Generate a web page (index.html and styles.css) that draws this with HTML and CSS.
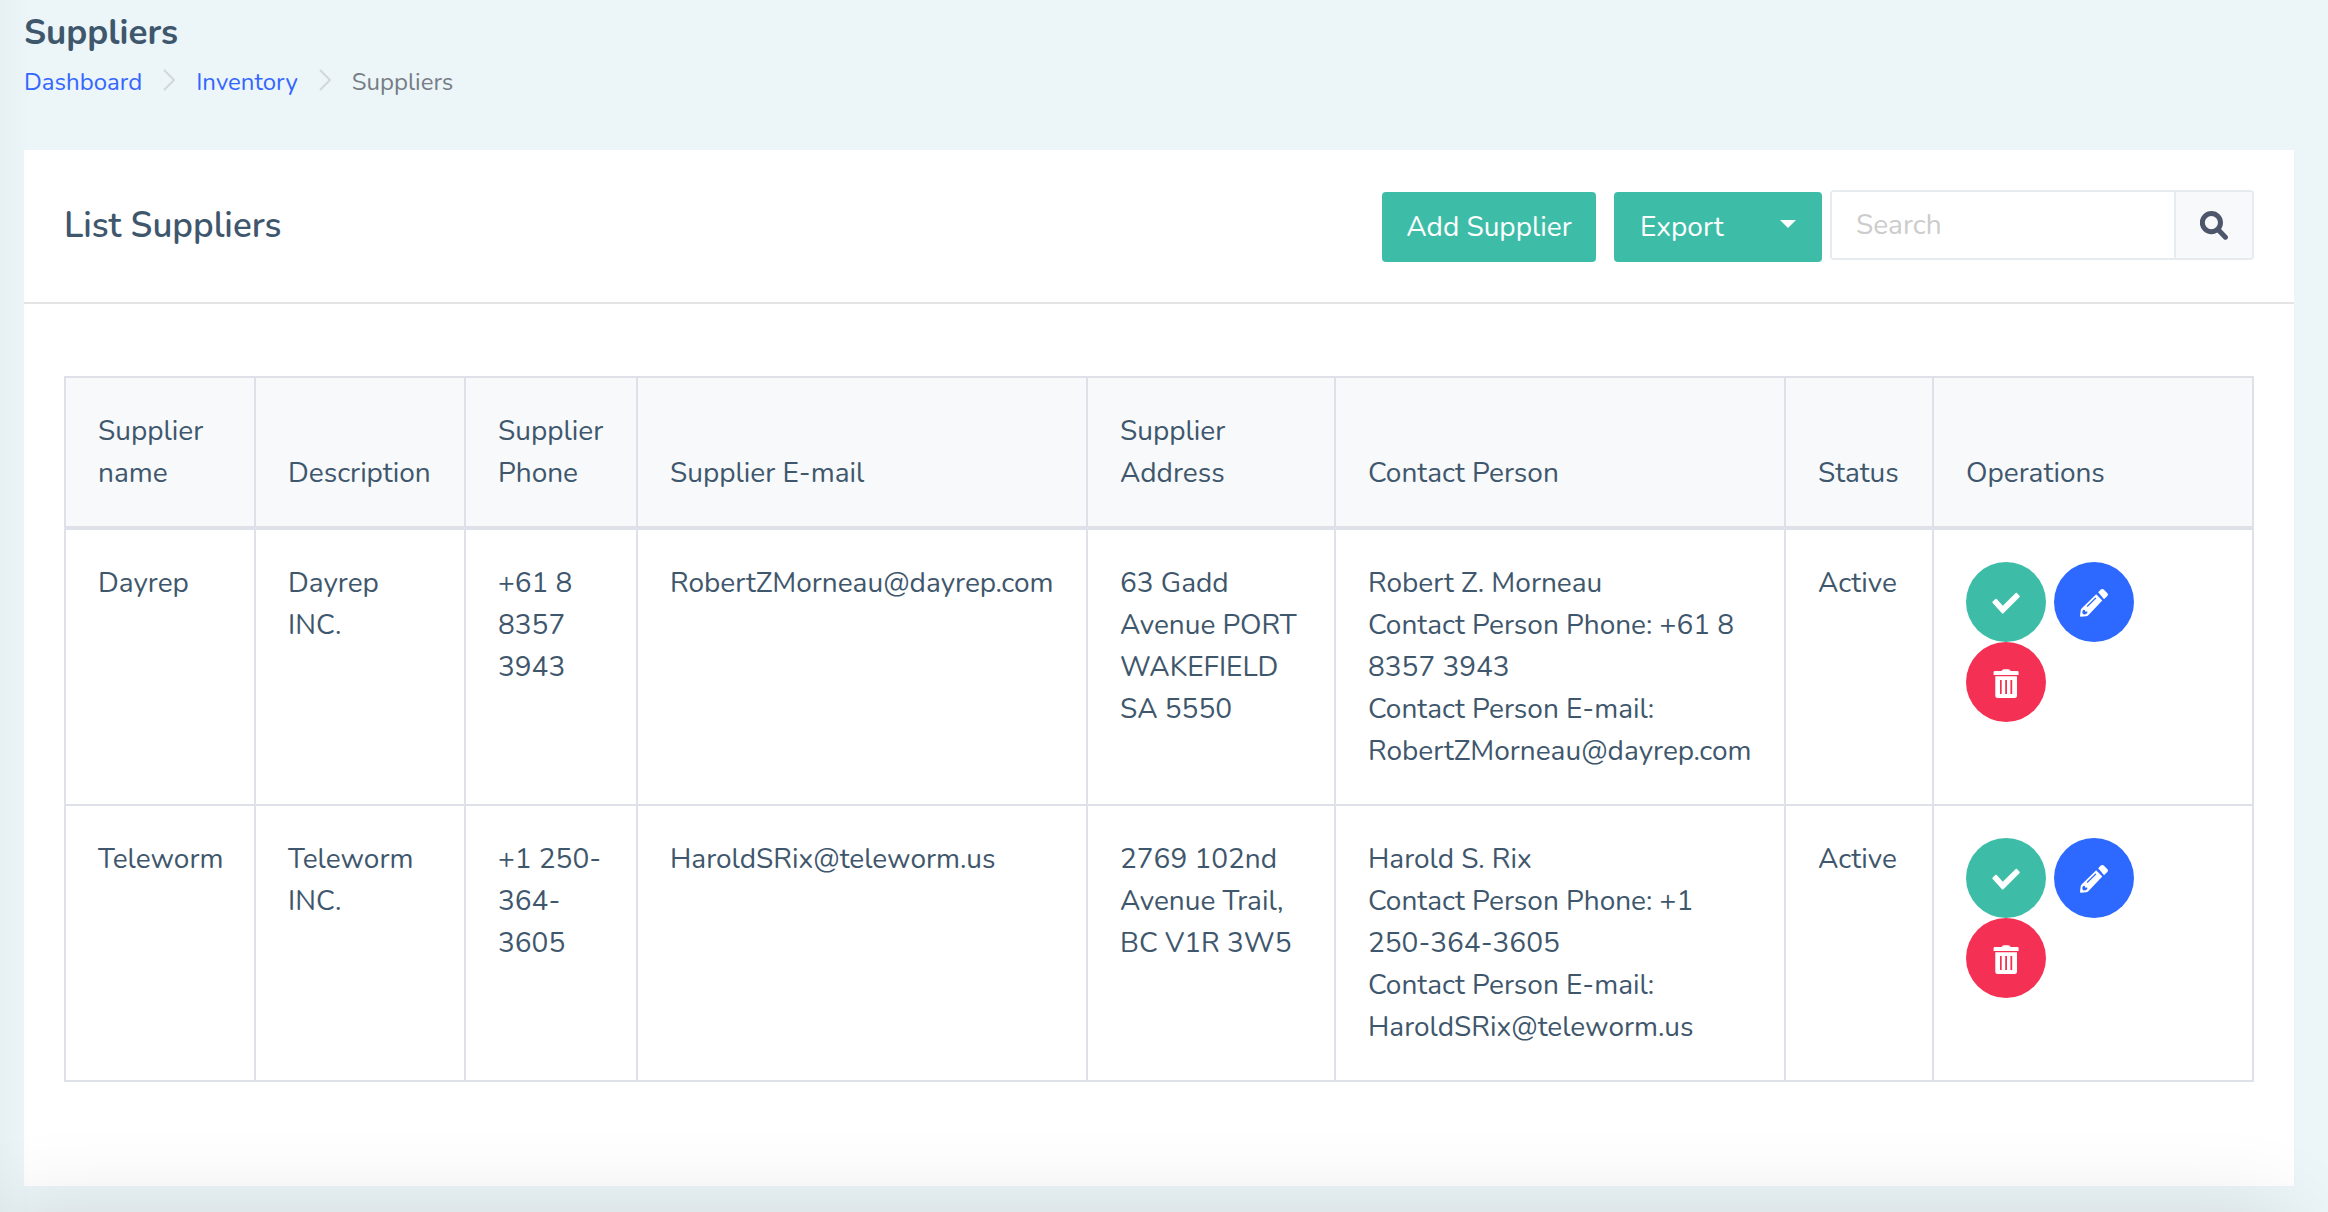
FILE: index.html
```html
<!DOCTYPE html>
<html lang="en">
<head>
  <meta charset="UTF-8" />
  <meta name="viewport" content="width=device-width, initial-scale=1.0"/>
  <title>Suppliers</title>
  <link rel="stylesheet" href="styles.css">
</head>
<body>
  <!-- icons used in the operations column -->
  <svg class="sprite" aria-hidden="true">
    <symbol id="icon-check" viewBox="0 0 28 30">
      <path d="M1.4 14.3L4 11.7L10.7 19.2L24.4 5.8L26.7 8.5L10.7 24.6Z" fill="currentColor" stroke="currentColor" stroke-width="2" stroke-linejoin="round"/>
    </symbol>
    <symbol id="icon-pencil" viewBox="0 0 28 30">
      <path d="M18.2 4.2L20.8 1.6Q22.3.2 23.8 1.6L27.2 5Q28.6 6.5 27.3 8L24 11.2Z" fill="currentColor"/>
      <path fill-rule="evenodd" d="M16.2 6.2L22.3 12.6L8.3 27.2Q7.3 28 6 28.2L.8 28.8Q0 28.8 0 28L.7 22.2Q.9 21 1.8 20.2ZM15.4 9.4L6.7 18L7.6 19L16.4 10.3ZM3.4 21.8L2.4 23.2L2.3 25L3.7 26.4L5.6 26.3L7.4 25L7.2 23.5L5 23.5L4.9 21.9Z" fill="currentColor"/>
    </symbol>
    <symbol id="icon-trash" viewBox="0 0 28 30">
      <path d="M2.7 3H9.5L10.5 1.8Q11 1.3 12 1.3H16.3Q17.2 1.3 17.7 1.8L18.7 3H25.5Q26.6 3 26.6 4.2V7H1.6V4.2Q1.6 3 2.7 3Z" fill="currentColor"/>
      <path fill-rule="evenodd" d="M3.3 8.2H25V27.5Q25 30 22.5 30H5.8Q3.3 30 3.3 27.5ZM8 12V26H9.7V12ZM13.2 12V26H15V12ZM18.4 12V26H20.2V12Z" fill="currentColor"/>
    </symbol>
  </svg>

  <header class="page-header">
    <h1>Suppliers</h1>
    <nav aria-label="Breadcrumb">
      <ol class="breadcrumb">
        <li><a href="#">Dashboard</a></li>
        <li><svg class="chevron" viewBox="0 0 12 22" aria-hidden="true"><path d="M1 1L11 11L1 21"/></svg><a href="#">Inventory</a></li>
        <li><svg class="chevron" viewBox="0 0 12 22" aria-hidden="true"><path d="M1 1L11 11L1 21"/></svg><span aria-current="page">Suppliers</span></li>
      </ol>
    </nav>
  </header>

  <main class="card">
    <div class="card-header">
      <h2>List Suppliers</h2>
      <div class="tools">
        <button type="button" class="btn">Add Supplier</button>
        <button type="button" class="btn btn-export" aria-haspopup="true">Export <span class="caret"></span></button>
        <form class="search">
          <input type="text" placeholder="Search" aria-label="Search">
          <button type="submit" aria-label="Search">
            <svg viewBox="0 0 28 29" aria-hidden="true"><circle cx="11.4" cy="11.6" r="9.1"/><path d="M18.5 19L25.4 26.2"/></svg>
          </button>
        </form>
      </div>
    </div>

    <div class="card-body">
      <table class="suppliers">
        <colgroup>
          <col class="col-name">
          <col class="col-description">
          <col class="col-phone">
          <col class="col-email">
          <col class="col-address">
          <col class="col-contact">
          <col class="col-status">
          <col>
        </colgroup>
        <thead>
          <tr>
            <th scope="col">Supplier name</th>
            <th scope="col">Description</th>
            <th scope="col">Supplier Phone</th>
            <th scope="col">Supplier E-mail</th>
            <th scope="col">Supplier<br>Address</th>
            <th scope="col">Contact Person</th>
            <th scope="col">Status</th>
            <th scope="col">Operations</th>
          </tr>
        </thead>
        <tbody>
          <tr>
            <td>Dayrep</td>
            <td>Dayrep<br>INC.</td>
            <td>+61 8<br>8357<br>3943</td>
            <td>RobertZMorneau@dayrep.com</td>
            <td>63 Gadd<br>Avenue PORT<br>WAKEFIELD<br>SA 5550</td>
            <td>Robert Z. Morneau<br>Contact Person Phone: +61 8<br>8357 3943<br>Contact Person E-mail:<br>RobertZMorneau@dayrep.com</td>
            <td>Active</td>
            <td>
              <div class="operations">
                <button type="button" class="op op-check" aria-label="Activate Dayrep"><svg><use href="#icon-check"/></svg></button>
                <button type="button" class="op op-edit" aria-label="Edit Dayrep"><svg><use href="#icon-pencil"/></svg></button>
                <button type="button" class="op op-delete" aria-label="Delete Dayrep"><svg><use href="#icon-trash"/></svg></button>
              </div>
            </td>
          </tr>
          <tr>
            <td>Teleworm</td>
            <td>Teleworm<br>INC.</td>
            <td>+1 250-<br>364-<br>3605</td>
            <td>HaroldSRix@teleworm.us</td>
            <td>2769 102nd<br>Avenue Trail,<br>BC V1R 3W5</td>
            <td>Harold S. Rix<br>Contact Person Phone: +1<br>250-364-3605<br>Contact Person E-mail:<br>HaroldSRix@teleworm.us</td>
            <td>Active</td>
            <td>
              <div class="operations">
                <button type="button" class="op op-check" aria-label="Activate Teleworm"><svg><use href="#icon-check"/></svg></button>
                <button type="button" class="op op-edit" aria-label="Edit Teleworm"><svg><use href="#icon-pencil"/></svg></button>
                <button type="button" class="op op-delete" aria-label="Delete Teleworm"><svg><use href="#icon-trash"/></svg></button>
              </div>
            </td>
          </tr>
        </tbody>
      </table>
    </div>
  </main>
</body>
</html>
```
FILE: styles.css
```css
* {
  box-sizing: border-box;
}
body {
  margin: 0;
  padding: 9px 34px 26px 24px;
  background-color: #ecf5f8;
  color: #3f576c;
  font-family: "Nunito", Lato, sans-serif;
  font-size: 28px;
  line-height: 42px;
}
/* soft shadows from the side menu and the bottom bar */
body::before,
body::after {
  content: "";
  position: fixed;
  pointer-events: none;
}
body::before {
  top: -100px;
  bottom: -100px;
  right: 100%;
  width: 100px;
  box-shadow: 0 0 40px rgba(0, 0, 0, 0.05);
}
body::after {
  top: 100%;
  left: 0;
  right: 40px;
  height: 200px;
  box-shadow: 0 0 90px rgba(0, 0, 0, 0.12);
}
button,
input {
  font: inherit;
  color: inherit;
}
button {
  cursor: pointer;
}
.sprite {
  display: none;
}

.page-header {
  padding-bottom: 49px;
}
h1 {
  margin: 0 0 6px;
  font-size: 35px;
  line-height: 48px;
  font-weight: 700;
}
.breadcrumb {
  display: flex;
  margin: 0;
  padding: 0;
  list-style: none;
  font-size: 24px;
  line-height: 38px;
  color: #777d85;
}
.breadcrumb li {
  display: flex;
}
.breadcrumb a {
  color: #3366ff;
  text-decoration: none;
}
.chevron {
  width: 12px;
  height: 22px;
  margin: 6px 21px 0;
  fill: none;
  stroke: #d3d7da;
  stroke-width: 2;
}

.card {
  background-color: #fff;
}
.card-header {
  display: flex;
  justify-content: space-between;
  align-items: center;
  padding: 40px;
  border-bottom: 2px solid #e4e4e4;
}
h2 {
  margin: 0;
  font-size: 35px;
  font-weight: 600;
}
.tools {
  display: flex;
  align-items: flex-end;
  height: 72px;
}
.btn {
  height: 70px;
  min-width: 214px;
  margin-right: 18px;
  padding: 0 24px;
  border: none;
  border-radius: 4px;
  background-color: #3dbda7;
  color: #fff;
}
.btn-export {
  display: flex;
  justify-content: space-between;
  align-items: center;
  min-width: 208px;
  margin-right: 8px;
  padding: 0 26px;
}
.caret {
  margin-bottom: 6px;
  border: 8px solid transparent;
  border-top-color: #fff;
  border-bottom: none;
}
.search {
  display: flex;
  align-self: flex-start;
  width: 424px;
  height: 70px;
  border: 2px solid #e6ebf0;
  border-radius: 4px;
  overflow: hidden;
}
.search input {
  flex: 1;
  min-width: 0;
  padding: 0 24px;
  border: none;
  background-color: #fff;
}
.search input::placeholder {
  color: #cccccc;
}
.search button {
  display: flex;
  justify-content: center;
  align-items: center;
  width: 78px;
  border: none;
  border-left: 2px solid #e6ebf0;
  background-color: #f8f9fb;
  color: #4e566b;
}
.search svg {
  flex: none;
  width: 28px;
  height: 29px;
  fill: none;
  stroke: currentColor;
  stroke-width: 5;
  stroke-linecap: round;
}

.card-body {
  padding: 72px 40px 104px;
}
.suppliers {
  width: 100%;
  table-layout: fixed;
  border-collapse: collapse;
}
.suppliers th,
.suppliers td {
  padding: 32px;
  border: 2px solid #dee2e8;
  text-align: left;
  vertical-align: top;
}
.suppliers th {
  border-bottom-width: 4px;
  background-color: #f8f9fb;
  font-weight: 400;
  vertical-align: bottom;
}
.col-name {
  width: 190px;
}
.col-description {
  width: 210px;
}
.col-phone {
  width: 172px;
}
.col-email,
.col-contact {
  width: 450px;
}
.col-address {
  width: 248px;
}
.col-status {
  width: 148px;
}

.operations {
  display: flex;
  flex-wrap: wrap;
  column-gap: 8px;
}
.op {
  display: flex;
  justify-content: center;
  align-items: center;
  width: 80px;
  height: 80px;
  padding: 2px 0 0;
  border: none;
  border-radius: 50%;
  color: #fff;
}
.op svg {
  width: 28px;
  height: 30px;
}
.op-check {
  background-color: #3dbda7;
}
.op-edit {
  background-color: #2d69ff;
}
.op-delete {
  background-color: #f43054;
}
```
